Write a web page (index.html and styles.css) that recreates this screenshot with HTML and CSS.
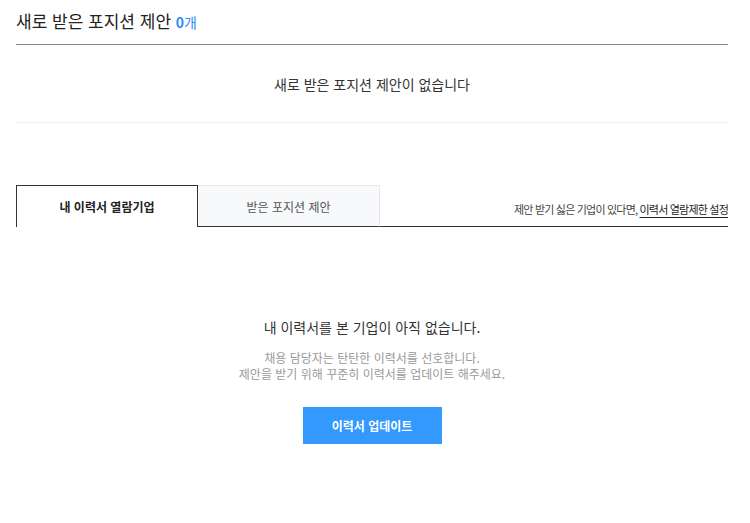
FILE: index.html
```html
<!DOCTYPE html>
<html lang="ko">
<head>
<meta charset="utf-8">
<link rel="stylesheet" href="styles.css">
</head>
<body>
<div class="page">
  <header class="head">
    <h2 class="head-title">새로 받은 포지션 제안 <span class="count"><b class="count-num">0</b>개</span></h2>
  </header>
  <section class="no-offer">새로 받은 포지션 제안이 없습니다</section>

  <nav class="tabs">
    <div class="tab tab-active">내 이력서 열람기업</div>
    <div class="tab tab-idle">받은 포지션 제안</div>
    <div class="tab-rest">제안 받기 싫은 기업이 있다면, <a class="rest-link">이력서 열람제한 설정</a></div>
  </nav>

  <section class="empty">
    <p class="empty-title">내 이력서를 본 기업이 아직 없습니다.</p>
    <p class="empty-sub">채용 담당자는 탄탄한 이력서를 선호합니다.<br>제안을 받기 위해 꾸준히 이력서를 업데이트 해주세요.</p>
    <button class="btn-update">이력서 업데이트</button>
  </section>
</div>
</body>
</html>
```
FILE: styles.css
```css
* { box-sizing: border-box; }
html, body { margin: 0; padding: 0; background: #fff; }
body {
  font-family: "Noto Sans CJK KR", "Noto Sans", sans-serif;
  color: #333;
}
.page {
  width: 712px;
  margin-left: 16px;
}
.head {
  border-bottom: 1px solid #878c98;
  padding-top: 9px;
  height: 45px;
}
.head-title {
  margin: 0;
  font-size: 17px;
  font-weight: 400;
  line-height: 24px;
  color: #222;
}
.count {
  color: #2d8cf0;
  font-size: 14px;
  font-weight: 400;
}
.count-num {
  font-weight: 700;
}
.no-offer {
  text-align: center;
  font-size: 14px;
  line-height: 20px;
  padding: 29px 0 28px;
  border-bottom: 1px solid #f0f0f0;
  color: #333;
}
.tabs {
  display: flex;
  align-items: flex-end;
  margin-top: 62px;
}
.tab {
  width: 182px;
  height: 42px;
  display: flex;
  align-items: center;
  justify-content: center;
  font-size: 12px;
  flex: none;
}
.tab-active {
  background: #fff;
  border: 1px solid #333;
  border-bottom: none;
  font-weight: 700;
  color: #222;
}
.tab-idle {
  background: #f8f9fa;
  border-top: 1px solid #e6e8eb;
  border-right: 1px solid #e6e8eb;
  border-bottom: 1px solid #333;
  color: #555;
}
.tab-rest {
  flex: 1;
  border-bottom: 1px solid #333;
  text-align: right;
  font-size: 11px;
  letter-spacing: -0.8px;
  line-height: 16px;
  padding-bottom: 9px;
  color: #444;
}
.rest-link {
  color: #222;
  text-decoration: underline;
  text-underline-offset: 3px;
}
.empty {
  text-align: center;
  padding-top: 90px;
}
.empty-title {
  margin: 0;
  font-size: 14px;
  line-height: 20px;
  color: #333;
}
.empty-sub {
  margin: 13px 0 0;
  font-size: 12px;
  line-height: 16px;
  color: #9a9a9a;
}
.btn-update {
  margin-top: 25px;
  width: 139px;
  height: 37px;
  border: none;
  background: #3399ff;
  color: #fff;
  font-family: inherit;
  font-size: 12px;
  font-weight: 700;
}
```
